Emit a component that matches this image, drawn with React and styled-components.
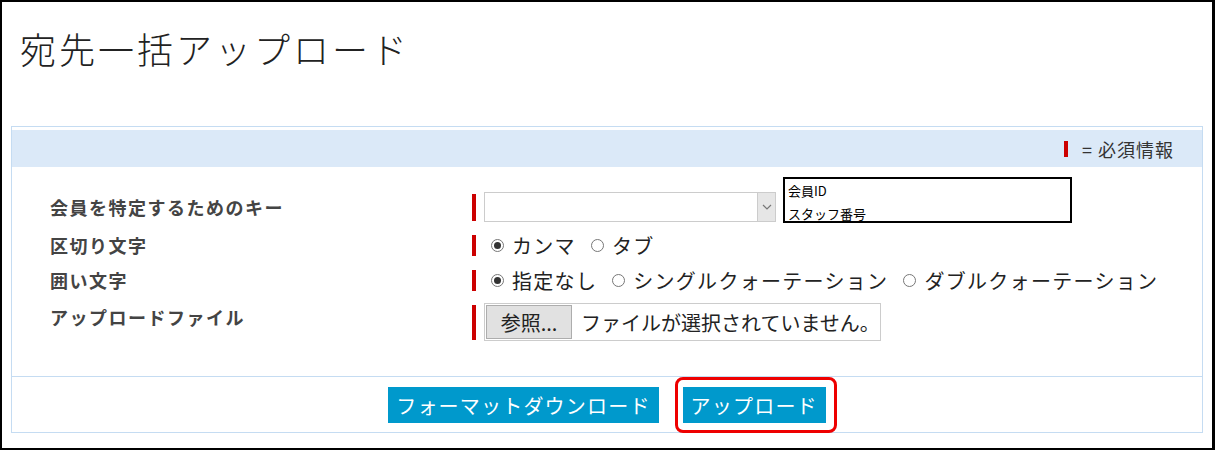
import React from "react";
import styled, { createGlobalStyle } from "styled-components";

const GlobalStyle = createGlobalStyle`
  html, body {
    margin: 0;
    padding: 0;
    background: #fff;
  }
  body {
    font-family: "Noto Sans CJK JP", "Noto Sans", sans-serif;
    color: #222;
  }
`;

const fields = [
  { label: "会員を特定するためのキー", kind: "select", height: 30 },
  { label: "区切り文字", kind: "radio", height: 24, options: ["カンマ", "タブ"] },
  {
    label: "囲い文字",
    kind: "radio",
    height: 24,
    options: ["指定なし", "シングルクォーテーション", "ダブルクォーテーション"],
  },
  { label: "アップロードファイル", kind: "file", height: 38 },
];

const App = () => {
  const renderControl = (f) => {
    if (f.kind === "select") {
      return (
        <SelectWrap>
          <FakeSelect>
            <SelectArrow>
              <svg width="10" height="6" viewBox="0 0 10 6">
                <path d="M1 1 L5 5 L9 1" fill="none" stroke="#777" strokeWidth="1.2" />
              </svg>
            </SelectArrow>
          </FakeSelect>
          <ListPopup>
            <ListItem>会員ID</ListItem>
            <ListItem>スタッフ番号</ListItem>
          </ListPopup>
        </SelectWrap>
      );
    }
    if (f.kind === "radio") {
      return (
        <RadioGroup>
          {f.options.map((o, i) => (
            <RadioLabel key={o}>
              <Radio $checked={i === 0} />
              {o}
            </RadioLabel>
          ))}
        </RadioGroup>
      );
    }
    return (
      <FileBox>
        <FileButton>参照...</FileButton>
        <FileText>ファイルが選択されていません。</FileText>
      </FileBox>
    );
  };

  return (
    <>
      <GlobalStyle />
      <Frame>
        <Title>宛先一括アップロード</Title>
        <Panel>
          <PanelHead>
            <RequiredMark />
            <HeadText>= 必須情報</HeadText>
          </PanelHead>
          <FormBody>
            {fields.map((f) => (
              <Row key={f.label} $h={f.height}>
                <Label $top={f.kind === "file"}>{f.label}</Label>
                <Bar />
                {renderControl(f)}
              </Row>
            ))}
          </FormBody>
          <Footer>
            <ActionButton>フォーマットダウンロード</ActionButton>
            <Highlight>
              <ActionButton>アップロード</ActionButton>
            </Highlight>
          </Footer>
        </Panel>
      </Frame>
    </>
  );
};

const Frame = styled.div`
  width: 1215px;
  height: 450px;
  box-sizing: border-box;
  border: 2px solid #000;
  border-right-width: 3px;
  padding: 0 9px 0 9px;
`;

const Title = styled.h1`
  margin: 0;
  padding: 20px 0 0 9px;
  height: 124px;
  box-sizing: border-box;
  font-size: 36px;
  line-height: 52px;
  font-weight: 300;
  letter-spacing: 3px;
  color: #222;
`;

const Panel = styled.div`
  border: 1px solid #c5dcf2;
  padding-top: 3px;
`;

const PanelHead = styled.div`
  height: 37px;
  background: #dbe9f8;
  display: flex;
  align-items: center;
  justify-content: flex-end;
  padding-right: 28px;
`;

const RequiredMark = styled.span`
  width: 4px;
  height: 16px;
  background: #c00;
  margin-right: 14px;
`;

const HeadText = styled.span`
  font-size: 18px;
  letter-spacing: 1px;
  color: #333;
`;

const FormBody = styled.div`
  padding: 25px 0 35px 38px;
  display: flex;
  flex-direction: column;
  gap: 11px;
`;

const Row = styled.div`
  display: flex;
  align-items: center;
  height: ${(p) => p.$h}px;
`;

const Label = styled.div`
  width: 422px;
  font-size: 18px;
  font-weight: 700;
  letter-spacing: 1.5px;
  color: #444;
  align-self: ${(p) => (p.$top ? "flex-start" : "center")};
  padding-top: ${(p) => (p.$top ? "1px" : "0")};
`;

const Bar = styled.span`
  width: 4px;
  align-self: stretch;
  margin: 2px 8px 1px 0;
  background: #c00;
`;

const SelectWrap = styled.div`
  position: relative;
`;

const FakeSelect = styled.div`
  width: 292px;
  height: 30px;
  box-sizing: border-box;
  border: 1px solid #ccc;
  background: #fff;
  display: flex;
  justify-content: flex-end;
`;

const SelectArrow = styled.span`
  width: 17px;
  background: #e6e6e6;
  border-left: 1px solid #ccc;
  display: flex;
  align-items: center;
  justify-content: center;
`;

const ListPopup = styled.div`
  position: absolute;
  left: 299px;
  top: -15px;
  width: 289px;
  height: 46px;
  box-sizing: border-box;
  border: 2px solid #000;
  background: #fff;
  overflow: hidden;
  padding-left: 3px;
`;

const ListItem = styled.div`
  font-size: 13px;
  line-height: 23px;
  color: #000;
`;

const RadioGroup = styled.div`
  display: flex;
  align-items: center;
  gap: 15px;
  margin-left: 7px;
`;

const RadioLabel = styled.label`
  display: flex;
  align-items: center;
  font-size: 20px;
  letter-spacing: 1.3px;
  color: #222;
  white-space: nowrap;
`;

const Radio = styled.span`
  width: 13px;
  height: 13px;
  box-sizing: border-box;
  border-radius: 50%;
  border: 1px solid #777;
  background: #fff;
  margin-right: 8px;
  display: flex;
  align-items: center;
  justify-content: center;
  &::after {
    content: "";
    width: 7px;
    height: 7px;
    border-radius: 50%;
    background: #333;
    display: ${(p) => (p.$checked ? "block" : "none")};
  }
`;

const FileBox = styled.div`
  width: 397px;
  height: 38px;
  box-sizing: border-box;
  border: 1px solid #ccc;
  padding: 1px;
  display: flex;
  align-items: stretch;
`;

const FileButton = styled.span`
  width: 86px;
  flex-shrink: 0;
  box-sizing: border-box;
  background: #e1e1e1;
  border: 1px solid #adadad;
  font-size: 20px;
  color: #222;
  display: flex;
  align-items: center;
  justify-content: center;
`;

const FileText = styled.span`
  padding-left: 9px;
  font-size: 20px;
  color: #222;
  white-space: nowrap;
  display: flex;
  align-items: center;
`;

const Footer = styled.div`
  border-top: 1px solid #c5dcf2;
  padding: 10px 0 9px;
  display: flex;
  justify-content: center;
  gap: 24px;
`;

const ActionButton = styled.button`
  height: 36px;
  border: none;
  background: #0099cc;
  color: #fff;
  font-family: "Noto Sans CJK JP", sans-serif;
  font-size: 20px;
  letter-spacing: 1.2px;
  padding: 0 8px;
  cursor: pointer;
`;

const Highlight = styled.div`
  position: relative;
  &::before {
    content: "";
    position: absolute;
    left: -8px;
    right: -11px;
    top: -10px;
    bottom: -10px;
    border: 3px solid #e00;
    border-radius: 8px;
    pointer-events: none;
  }
`;

export default App;
